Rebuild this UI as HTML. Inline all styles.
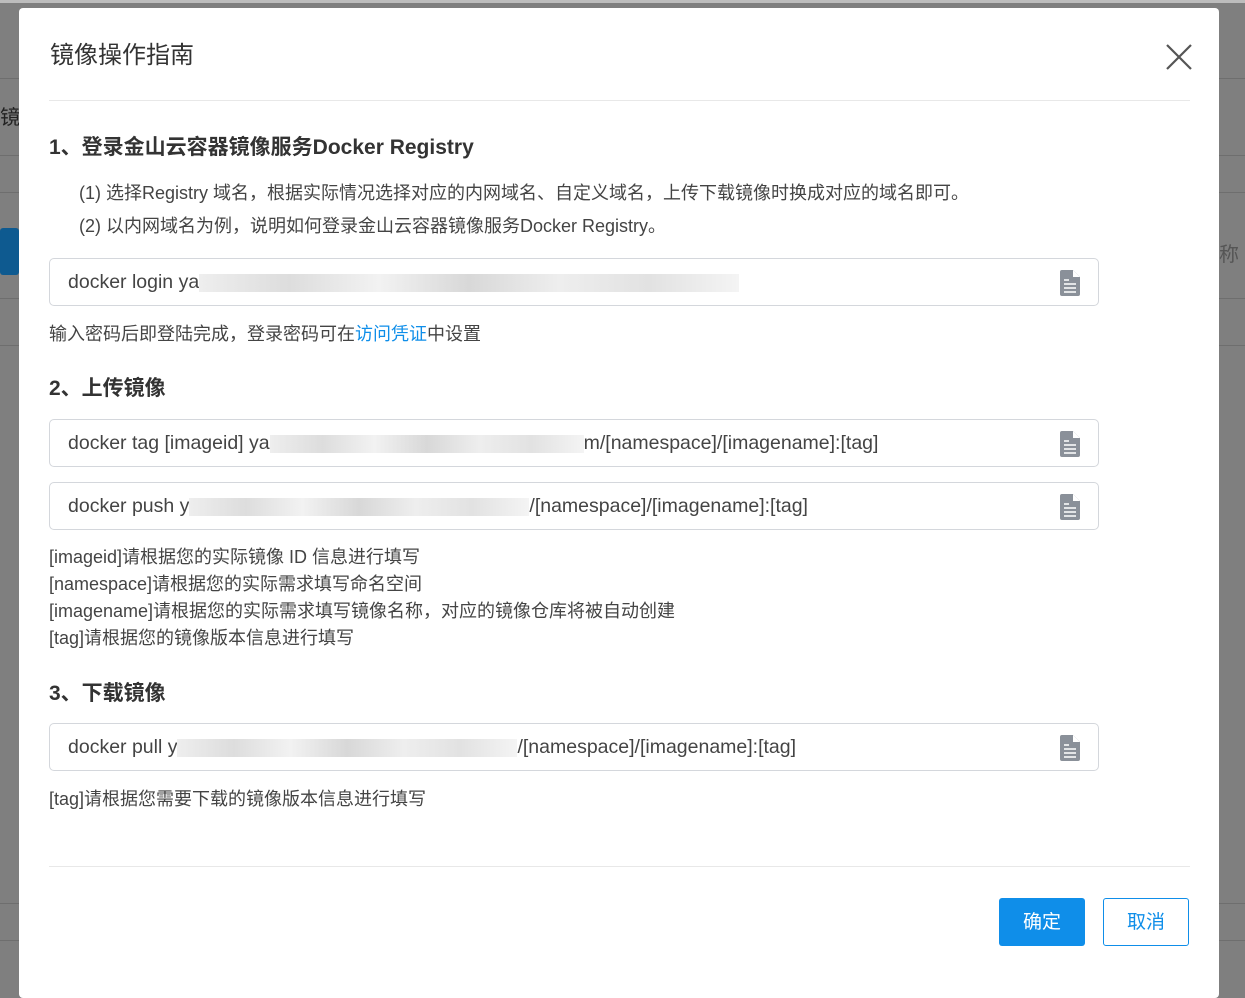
<!DOCTYPE html>
<html><head><meta charset="utf-8"><style>
*{margin:0;padding:0;box-sizing:border-box}
body{width:1245px;height:973px;overflow:hidden;background:#7f7f7f;font-family:"Liberation Sans","Noto Sans CJK SC",sans-serif;position:relative;color:#333}
.bgl{position:absolute;left:0;right:0;height:1px;background:#6e6e6e}
.modal{position:absolute;left:19px;top:8px;width:1200px;height:990px;background:#fff;border-radius:4px}
.a{position:absolute;white-space:nowrap}
.box{position:absolute;left:30px;width:1050px;height:48px;border:1px solid #d4d7dc;border-radius:5px;font-size:19.5px;color:#444;line-height:46px;padding-left:18px}
.blur{display:inline-block;height:18px;vertical-align:middle;background:linear-gradient(90deg,#eee,#ddd,#f2f2f2,#d8d8d8,#eee,#e2e2e2,#f4f4f4)}
.ic{position:absolute;right:18px;top:11px}
.h{font-size:21px;font-weight:bold;color:#333}
.p{font-size:18px;color:#444}
</style></head><body>
<div style="position:absolute;left:0;top:0;width:1245px;height:3px;background:#bdbdbd"></div>
<div class="bgl" style="top:78px"></div>
<div class="bgl" style="top:155px"></div>
<div class="bgl" style="top:192px"></div>
<div class="bgl" style="top:298px"></div>
<div class="bgl" style="top:345px"></div>
<div class="bgl" style="top:903px"></div>
<div class="bgl" style="top:940px"></div>
<div class="a" style="left:0;top:101px;font-size:20px;color:#222">镜</div>
<div style="position:absolute;left:0;top:228px;width:19px;height:47px;background:#0e5a90;border-radius:3px"></div>
<div class="a" style="left:1219px;top:238px;font-size:20px;color:#555">称</div>
<div class="modal">
<div class="a" style="left:31px;top:27px;font-size:24px;color:#333">镜像操作指南</div>
<svg class="a" style="left:1146px;top:35px" width="28" height="28" viewBox="0 0 28 28"><path d="M2 2L26 26M26 2L2 26" stroke="#555" stroke-width="2.2"/></svg>
<div class="a" style="left:30px;top:92px;width:1141px;height:1px;background:#e8e8e8"></div>
<div class="a h" style="left:30px;top:123px">1、登录金山云容器镜像服务Docker Registry</div>
<div class="a p" style="left:60px;top:171px">(1) 选择Registry 域名，根据实际情况选择对应的内网域名、自定义域名，上传下载镜像时换成对应的域名即可。</div>
<div class="a p" style="left:60px;top:204px">(2) 以内网域名为例，说明如何登录金山云容器镜像服务Docker Registry。</div>
<div class="box" style="top:250px">docker login ya<span class="blur" style="width:540px"></span><svg class="ic" width="20" height="26" viewBox="0 0 20 26"><path d="M0 2a2 2 0 0 1 2-2h11l7 7v17a2 2 0 0 1-2 2H2a2 2 0 0 1-2-2z" fill="#8a9099"/><path d="M13 0v7h7" fill="#fff"/><path d="M4 10h5M4 14h12M4 18h12M4 22h12" stroke="#fff" stroke-width="1.6"/></svg></div>
<div class="a p" style="left:30px;top:312px">输入密码后即登陆完成，登录密码可在<span style="color:#0f8ee9">访问凭证</span>中设置</div>
<div class="a h" style="left:30px;top:364px">2、上传镜像</div>
<div class="box" style="top:411px">docker tag [imageid] ya<span class="blur" style="width:314px"></span>m/[namespace]/[imagename]:[tag]<svg class="ic" width="20" height="26" viewBox="0 0 20 26"><path d="M0 2a2 2 0 0 1 2-2h11l7 7v17a2 2 0 0 1-2 2H2a2 2 0 0 1-2-2z" fill="#8a9099"/><path d="M13 0v7h7" fill="#fff"/><path d="M4 10h5M4 14h12M4 18h12M4 22h12" stroke="#fff" stroke-width="1.6"/></svg></div>
<div class="box" style="top:474px">docker push y<span class="blur" style="width:340px"></span>/[namespace]/[imagename]:[tag]<svg class="ic" width="20" height="26" viewBox="0 0 20 26"><path d="M0 2a2 2 0 0 1 2-2h11l7 7v17a2 2 0 0 1-2 2H2a2 2 0 0 1-2-2z" fill="#8a9099"/><path d="M13 0v7h7" fill="#fff"/><path d="M4 10h5M4 14h12M4 18h12M4 22h12" stroke="#fff" stroke-width="1.6"/></svg></div>
<div class="a p" style="left:30px;top:536px;line-height:27px">[imageid]请根据您的实际镜像 ID 信息进行填写<br>[namespace]请根据您的实际需求填写命名空间<br>[imagename]请根据您的实际需求填写镜像名称，对应的镜像仓库将被自动创建<br>[tag]请根据您的镜像版本信息进行填写</div>
<div class="a h" style="left:30px;top:669px">3、下载镜像</div>
<div class="box" style="top:715px">docker pull y<span class="blur" style="width:340px"></span>/[namespace]/[imagename]:[tag]<svg class="ic" width="20" height="26" viewBox="0 0 20 26"><path d="M0 2a2 2 0 0 1 2-2h11l7 7v17a2 2 0 0 1-2 2H2a2 2 0 0 1-2-2z" fill="#8a9099"/><path d="M13 0v7h7" fill="#fff"/><path d="M4 10h5M4 14h12M4 18h12M4 22h12" stroke="#fff" stroke-width="1.6"/></svg></div>
<div class="a p" style="left:30px;top:777px">[tag]请根据您需要下载的镜像版本信息进行填写</div>
<div class="a" style="left:30px;top:858px;width:1141px;height:1px;background:#e8e8e8"></div>
<div class="a" style="left:980px;top:890px;width:86px;height:48px;background:#0f8ee9;border-radius:3px;color:#fff;font-size:19px;text-align:center;line-height:50px">确定</div>
<div class="a" style="left:1084px;top:890px;width:86px;height:48px;border:1px solid #0f8ee9;border-radius:3px;color:#0f8ee9;font-size:19px;text-align:center;line-height:48px">取消</div>
</div>
</body></html>
